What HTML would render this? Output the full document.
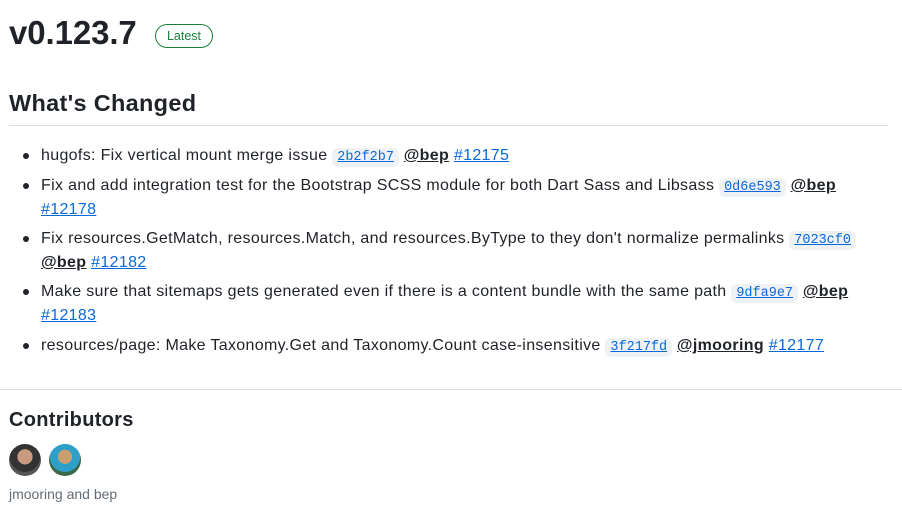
<!DOCTYPE html>
<html><head><meta charset="utf-8"><style>
body{margin:0;width:902px;height:528px;background:#fff;font-family:"Liberation Sans","DejaVu Sans",sans-serif;color:#1f2328;position:relative;overflow:hidden}
.a{position:absolute;white-space:nowrap}
h1{position:absolute;left:9px;top:14px;margin:0;font-size:33px;font-weight:bold;letter-spacing:-0.1px}
.badge{position:absolute;left:155px;top:24px;width:56px;height:22px;border:1px solid #1a7f37;border-radius:12px;color:#1a7f37;font-size:12.5px;line-height:22px;text-align:center}
h2{position:absolute;left:9px;top:90px;margin:0;font-size:23.5px;font-weight:bold;letter-spacing:0.3px}
.hr1{position:absolute;left:9px;top:125px;width:879px;height:1px;background:#d8dee4}
.hr2{position:absolute;left:0;top:389px;width:902px;height:1px;background:#d8dee4}
.l{font-size:16px;line-height:24px;letter-spacing:0.33px}
.dot{position:absolute;left:23px;width:6px;height:6px;border-radius:50%;background:#1f2328}
code{font-family:"Liberation Mono",monospace;font-size:13.5px;background:#eff2f5;border-radius:6px;padding:2px 5px;color:#0969da;text-decoration:underline;letter-spacing:0}
b{text-decoration:underline}
.k{color:#0969da;text-decoration:underline}
h3{position:absolute;left:9px;top:409px;margin:0;font-size:20px;font-weight:bold;letter-spacing:0.3px}
.av{position:absolute;top:444px;width:32px;height:32px;border-radius:50%}
</style></head><body>
<h1>v0.123.7</h1>
<div class="badge">Latest</div>
<h2>What's Changed</h2>
<div class="hr1"></div>
<div class="dot" style="top:153px"></div>
<div class="a l" style="left:41px;top:144px">hugofs: Fix vertical mount merge issue <code>2b2f2b7</code> <b>@bep</b> <span class="k">#12175</span></div>
<div class="dot" style="top:183px"></div>
<div class="a l" style="left:41px;top:174px">Fix and add integration test for the Bootstrap SCSS module for both Dart Sass and Libsass <code>0d6e593</code> <b>@bep</b></div>
<div class="a l" style="left:41px;top:198px"><span class="k">#12178</span></div>
<div class="dot" style="top:236px"></div>
<div class="a l" style="left:41px;top:227px">Fix resources.GetMatch, resources.Match, and resources.ByType to they don't normalize permalinks <code>7023cf0</code></div>
<div class="a l" style="left:41px;top:251px"><b>@bep</b> <span class="k">#12182</span></div>
<div class="dot" style="top:289px"></div>
<div class="a l" style="left:41px;top:280px">Make sure that sitemaps gets generated even if there is a content bundle with the same path <code>9dfa9e7</code> <b>@bep</b></div>
<div class="a l" style="left:41px;top:304px"><span class="k">#12183</span></div>
<div class="dot" style="top:343px"></div>
<div class="a l" style="left:41px;top:334px">resources/page: Make Taxonomy.Get and Taxonomy.Count case-insensitive <code>3f217fd</code> <b>@jmooring</b> <span class="k">#12177</span></div>
<div class="hr2"></div>
<h3>Contributors</h3>
<div class="av" style="left:9px;background:radial-gradient(circle at 50% 40%,#c89a80 0 30%,#333 31% 60%,#555 61%)"></div>
<div class="av" style="left:49px;background:radial-gradient(circle at 50% 40%,#c8a070 0 28%,#2ea0c8 29% 60%,#3a6a4a 61%)"></div>
<div class="a" style="left:9px;top:486px;font-size:14px;color:#656d76">jmooring and bep</div>
</body></html>
